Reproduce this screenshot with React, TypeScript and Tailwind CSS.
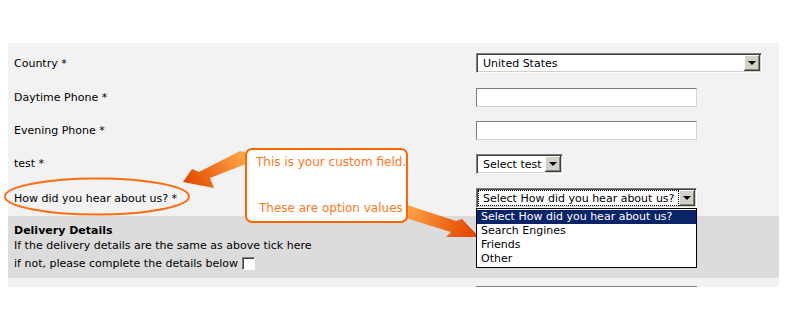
import React from 'react';

const font = { fontFamily: '"DejaVu Sans", Verdana, sans-serif' };

const ArrowButton = () => (
  <div className="w-[16px] h-[16px] bg-[#d4d0c8] flex items-center justify-center shadow-[inset_-1px_-1px_0_#404040,inset_1px_1px_0_#ffffff,inset_-2px_-2px_0_#808080]">
    <div className="w-0 h-0 border-l-[4px] border-r-[4px] border-t-[4px] border-l-transparent border-r-transparent border-t-black" />
  </div>
);

const Select = ({ width, label, focus }: { width: string; label: string; focus?: boolean }) => (
  <div className={`${width} h-[20px] bg-white flex items-center border border-t-[#808080] border-l-[#808080] border-b-white border-r-white shadow-[inset_1px_1px_0_#404040,inset_-1px_-1px_0_#d4d0c8] pl-[1px] pr-[1px]`}>
    <div className={`flex-1 h-[16px] leading-[15px] pl-[4px] whitespace-nowrap ${focus ? 'border border-dotted border-black' : 'border border-transparent'}`}>{label}</div>
    <ArrowButton />
  </div>
);

const TextInput = () => (
  <div className="w-[221px] h-[19px] bg-white border border-t-[#7a7a7a] border-l-[#7a7a7a] border-b-[#d4d4d4] border-r-[#d4d4d4]" />
);

export default function App() {
  const rows: { label: string; h: string; field: React.ReactNode }[] = [
    { label: 'Country *', h: 'h-[34px]', field: <Select width="w-[286px]" label="United States" /> },
    { label: 'Daytime Phone *', h: 'h-[34px]', field: <TextInput /> },
    { label: 'Evening Phone *', h: 'h-[33px]', field: <TextInput /> },
    { label: 'test *', h: 'h-[33px]', field: <Select width="w-[87px]" label="Select test" /> },
  ];

  return (
    <div className="relative w-[787px] h-[331px] bg-white text-[11px] text-black overflow-hidden" style={font}>
      <div className="h-[43px]" />
      <div className="mx-2 bg-[#f2f2f2]">
        <div className="h-[3px]" />
        {rows.map((r) => (
          <div key={r.label} className={`flex items-center ${r.h}`}>
            <div className="w-[468px] pl-[6px] pt-[2px]">{r.label}</div>
            {r.field}
          </div>
        ))}

        {/* row with open dropdown */}
        <div className="flex items-center h-[36px]">
          <div className="w-[468px] pl-[6px] pt-[2px]">How did you hear about us? *</div>
          <div className="relative z-10">
            <Select width="w-[221px]" label="Select How did you hear about us?" focus />
            <div className="absolute left-0 top-full w-[221px] bg-white border border-black py-[1px]">
              <div className="h-[14px] leading-[14px] pl-[4px] bg-[#0a246a] text-white">Select How did you hear about us?</div>
              <div className="h-[14px] leading-[14px] pl-[4px]">Search Engines</div>
              <div className="h-[14px] leading-[14px] pl-[4px]">Friends</div>
              <div className="h-[14px] leading-[14px] pl-[4px]">Other</div>
            </div>
          </div>
        </div>

        {/* Delivery */}
        <div className="bg-[#dcdcdc] h-[62px] pl-[6px] pt-[8px]">
          <div className="h-[15px] leading-[14px] font-bold">Delivery Details</div>
          <div className="h-[14px] leading-[14px]">If the delivery details are the same as above tick here</div>
          <div className="mt-[3px] h-[15px] flex items-center gap-[4px]">
            <span className="pt-[1px]">if not, please complete the details below</span>
            <div className="w-[13px] h-[13px] bg-white border border-t-[#808080] border-l-[#808080] border-b-white border-r-white shadow-[inset_1px_1px_0_#404040]" />
          </div>
        </div>

        <div className="h-[9px] pt-[8px] pl-[468px]">
          <div className="w-[221px] h-[1px] bg-[#808080]" />
        </div>
      </div>

      {/* annotations */}
      <svg className="absolute inset-0 pointer-events-none" width="787" height="331">
        <defs>
          <linearGradient id="a1" x1="245" y1="155" x2="188" y2="182" gradientUnits="userSpaceOnUse">
            <stop offset="0" stopColor="#ffa84a" />
            <stop offset="1" stopColor="#e44a00" />
          </linearGradient>
          <linearGradient id="a2" x1="404" y1="208" x2="470" y2="234" gradientUnits="userSpaceOnUse">
            <stop offset="0" stopColor="#ffa84a" />
            <stop offset="1" stopColor="#e44a00" />
          </linearGradient>
        </defs>
        <ellipse cx="97" cy="196.5" rx="92" ry="18" fill="none" stroke="#ff6a13" strokeWidth="2" />
        <polygon points="183,182 192,169 199,172 240,151 248,153 246,164 210,178 214,188" fill="url(#a1)" />
        <polygon points="404,204 456,221 462,219 479,237 446,237 451,232 402,217" fill="url(#a2)" />
      </svg>

      <div className="absolute left-[245px] top-[148px] w-[163px] h-[75px] bg-white border-2 border-[#ff6600] rounded-[7px] text-[12px] text-[#ff7722]">
        <div className="absolute left-[9px] top-[3px] whitespace-nowrap">This is your custom field.</div>
        <div className="absolute left-[12px] top-[49px] whitespace-nowrap">These are option values</div>
      </div>
    </div>
  );
}
